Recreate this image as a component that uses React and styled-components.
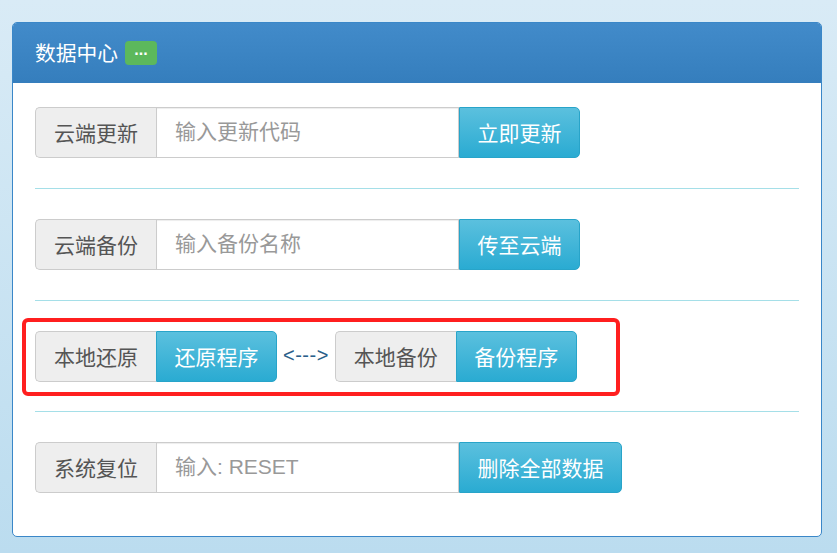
import React from "react";
import styled, { createGlobalStyle } from "styled-components";

const GlobalStyle = createGlobalStyle`
  html, body {
    margin: 0;
    padding: 0;
    height: 100%;
  }
  body {
    background: linear-gradient(to bottom, #d9ebf6 0%, #bbdcef 100%);
    font-family: "Liberation Sans", "Noto Sans CJK SC", sans-serif;
    color: #555;
  }
  * {
    box-sizing: border-box;
  }
`;

const rows = [
  { label: "云端更新", placeholder: "输入更新代码", action: "立即更新" },
  { label: "云端备份", placeholder: "输入备份名称", action: "传至云端" },
  null,
  { label: "系统复位", placeholder: "输入: RESET", action: "删除全部数据" },
];

const App = () => {
  return (
    <React.Fragment>
      <GlobalStyle />
      <Page>
        <Panel>
          <PanelHeader>
            <PanelTitle>数据中心</PanelTitle>
            <Badge>...</Badge>
          </PanelHeader>
          <PanelBody>
            {rows.map((row, i) => (
              <React.Fragment key={i}>
                {i > 0 && <Divider />}
                {row ? (
                  <InputGroup>
                    <Addon>{row.label}</Addon>
                    <Field placeholder={row.placeholder} />
                    <InfoButton>{row.action}</InfoButton>
                  </InputGroup>
                ) : (
                  <Highlight>
                    <InputGroup>
                      <Addon>本地还原</Addon>
                      <InfoButton>还原程序</InfoButton>
                    </InputGroup>
                    <Arrow>{"<--->"}</Arrow>
                    <InputGroup>
                      <Addon>本地备份</Addon>
                      <InfoButton>备份程序</InfoButton>
                    </InputGroup>
                  </Highlight>
                )}
              </React.Fragment>
            ))}
          </PanelBody>
        </Panel>
      </Page>
    </React.Fragment>
  );
};

const Page = styled.div`
  padding: 22px 16px 0 12px;
  min-height: 553px;
`;

const Panel = styled.div`
  width: 810px;
  background: #fff;
  border: 1px solid #3a87c8;
  border-radius: 5px;
  overflow: hidden;
`;

const PanelHeader = styled.div`
  display: flex;
  align-items: center;
  height: 60px;
  padding: 0 22px;
  background: linear-gradient(to bottom, #428bca 0%, #357ebd 100%);
  border-bottom: 1px solid #357ebd;
`;

const PanelTitle = styled.span`
  font-family: "Noto Sans CJK SC", sans-serif;
  font-size: 20.75px;
  color: #fff;
  line-height: 1;
`;

const Badge = styled.span`
  display: inline-flex;
  align-items: center;
  justify-content: center;
  margin-left: 7px;
  width: 32px;
  height: 24px;
  border-radius: 4px;
  background: #5cb85c;
  color: #fff;
  font-family: "Liberation Sans", sans-serif;
  font-weight: bold;
  font-size: 16px;
  padding-bottom: 6px;
`;

const PanelBody = styled.div`
  padding: 24px 22px 43px 22px;
`;

const Divider = styled.div`
  height: 1px;
  background: #a5dfe8;
  margin: 30px 0;
`;

const InputGroup = styled.div`
  display: inline-flex;
  flex: none;
  height: 51px;
  vertical-align: top;
`;

const Addon = styled.div`
  display: flex;
  align-items: center;
  padding: 0 18px 2px;
  background: #eee;
  border: 1px solid #ccc;
  border-right: none;
  border-radius: 5px 0 0 5px;
  font-family: "Noto Sans CJK SC", sans-serif;
  font-size: 21px;
  color: #555;
  white-space: nowrap;
`;

const Field = styled.input`
  width: 303px;
  height: 51px;
  padding: 0 18px 2px;
  border: 1px solid #ccc;
  border-radius: 0;
  box-shadow: inset 0 1px 1px rgba(0, 0, 0, 0.075);
  font-family: "Liberation Sans", "Noto Sans CJK SC", sans-serif;
  font-size: 21px;
  color: #555;
  outline: none;
  &::placeholder {
    color: #999;
  }
`;

const InfoButton = styled.button`
  height: 51px;
  padding: 0 17.5px 2px;
  border: 1px solid #28a4c9;
  border-radius: 0 5px 5px 0;
  background: linear-gradient(to bottom, #5bc0de 0%, #2aabd2 100%);
  color: #fff;
  font-family: "Noto Sans CJK SC", sans-serif;
  font-size: 21px;
  white-space: nowrap;
  cursor: pointer;
`;

const Highlight = styled.div`
  display: flex;
  align-items: flex-start;
  width: 598px;
  height: 78px;
  margin: -13px 0 -15px -13px;
  padding: 9px 9px 10px;
  border: 4px solid #ff1f1f;
  border-radius: 6px;
`;

const Arrow = styled.span`
  align-self: center;
  margin: 0 6px;
  font-family: "Liberation Sans", sans-serif;
  font-size: 20px;
  line-height: 1;
  color: #2a5f8a;
  padding-bottom: 4px;
  letter-spacing: 0.5px;
`;

export default App;
